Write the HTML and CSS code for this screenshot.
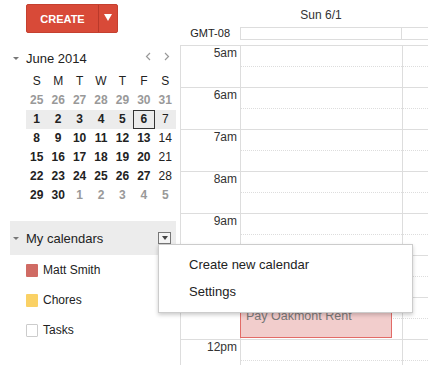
FILE: index.html
```html
<!DOCTYPE html>
<html lang="en">
<head>
    <meta charset="UTF-8">
    <title>Calendar</title>
    <link rel="stylesheet" href="styles.css">
</head>
<body>
    <div class="app">
        <div class="sidebar">
            <div class="create">
                <button class="create-main">CREATE</button>
                <button class="create-arrow">
                    <svg width="8" height="7" viewBox="0 0 8 7"><path d="M0 0H8L4 7Z" fill="#fff"/></svg>
                </button>
            </div>

            <div class="mini-cal">
                <div class="mini-head">
                    <span class="caret"></span>
                    <span class="month">June 2014</span>
                    <span class="nav">
                        <svg width="6" height="9" viewBox="0 0 6 9"><path d="M5 1L1.5 4.5L5 8" fill="none" stroke="#999" stroke-width="1.2"/></svg>
                        <svg width="6" height="9" viewBox="0 0 6 9"><path d="M1 1L4.5 4.5L1 8" fill="none" stroke="#999" stroke-width="1.2"/></svg>
                    </span>
                </div>
                <div class="week week-names">
                    <span>S</span><span>M</span><span>T</span><span>W</span><span>T</span><span>F</span><span>S</span>
                </div>
                <div class="week">
                    <span class="off">25</span><span class="off">26</span><span class="off">27</span><span class="off">28</span><span class="off">29</span><span class="off">30</span><span class="off">31</span>
                </div>
                <div class="week current">
                    <span>1</span><span>2</span><span>3</span><span>4</span><span>5</span><span class="today">6</span><span class="sat">7</span>
                </div>
                <div class="week">
                    <span>8</span><span>9</span><span>10</span><span>11</span><span>12</span><span>13</span><span class="sat">14</span>
                </div>
                <div class="week">
                    <span>15</span><span>16</span><span>17</span><span>18</span><span>19</span><span>20</span><span class="sat">21</span>
                </div>
                <div class="week">
                    <span>22</span><span>23</span><span>24</span><span>25</span><span>26</span><span>27</span><span class="sat">28</span>
                </div>
                <div class="week">
                    <span>29</span><span>30</span><span class="off">1</span><span class="off">2</span><span class="off">3</span><span class="off">4</span><span class="off">5</span>
                </div>
            </div>

            <div class="cal-band">
                <span class="caret"></span>
                <span class="band-title">My calendars</span>
                <span class="band-menu"><span class="mini-caret"></span></span>
            </div>
            <ul class="cal-list">
                <li><span class="swatch red"></span>Matt Smith</li>
                <li><span class="swatch yellow"></span>Chores</li>
                <li><span class="swatch empty"></span>Tasks</li>
            </ul>

            <div class="menu">
                <div class="menu-item">Create new calendar</div>
                <div class="menu-item">Settings</div>
            </div>
        </div>

        <div class="main">
            <div class="day-head">
                <div class="gutter"></div>
                <div class="day-name">Sun 6/1</div>
            </div>
            <div class="allday">
                <div class="gutter tz">GMT-08</div>
                <div class="allday-box">
                    <div class="allday-cell"></div>
                    <div class="allday-rest"></div>
                </div>
            </div>

            <div class="grid">
                <div class="hour"><div class="time">5am</div><div class="slot"><div class="half"></div></div><div class="slot rest"><div class="half"></div></div></div>
                <div class="hour"><div class="time">6am</div><div class="slot"><div class="half"></div></div><div class="slot rest"><div class="half"></div></div></div>
                <div class="hour"><div class="time">7am</div><div class="slot"><div class="half"></div></div><div class="slot rest"><div class="half"></div></div></div>
                <div class="hour"><div class="time">8am</div><div class="slot"><div class="half"></div></div><div class="slot rest"><div class="half"></div></div></div>
                <div class="hour"><div class="time">9am</div><div class="slot"><div class="half"></div></div><div class="slot rest"><div class="half"></div></div></div>
                <div class="hour"><div class="time">10am</div><div class="slot"><div class="half"></div></div><div class="slot rest"><div class="half"></div></div></div>
                <div class="hour">
                    <div class="time">11am</div>
                    <div class="slot">
                        <div class="half"></div>
                        <div class="event">Pay Oakmont Rent</div>
                    </div>
                    <div class="slot rest"><div class="half"></div></div>
                </div>
                <div class="hour"><div class="time">12pm</div><div class="slot"><div class="half"></div></div><div class="slot rest"><div class="half"></div></div></div>
            </div>
        </div>
    </div>
</body>
</html>
```

FILE: styles.css
```css
:root {
    --text-color: #222;
    --muted-color: #999;
    --line-color: #ddd;
    --red: #d84a38;
}

* {
    box-sizing: border-box;
    margin: 0;
    padding: 0;
}

body {
    font-family: "Liberation Sans", Arial, sans-serif;
    color: var(--text-color);
    background: #fff;
    overflow: hidden;
}

.app {
    display: flex;
    height: 365px;
}

/* sidebar */

.sidebar {
    width: 180px;
    flex-shrink: 0;
    position: relative;
}

.create {
    display: flex;
    margin: 4px 0 0 26px;
    height: 29px;
    width: 92px;
    border: 1px solid #c5402f;
    border-radius: 2px;
    background: var(--red);
    overflow: hidden;
}

.create button {
    border: none;
    background: transparent;
    color: #fff;
    font-family: inherit;
    cursor: pointer;
}

.create-main {
    width: 71px;
    font-size: 11px;
    font-weight: bold;
}

.create-arrow {
    flex: 1;
    border-left: 1px solid #b9392a !important;
    display: flex;
    align-items: center;
    justify-content: center;
    padding-bottom: 2px;
}

.mini-cal {
    margin: 16px 0 0 26px;
    width: 150px;
}

.mini-head {
    position: relative;
    display: flex;
    align-items: center;
    height: 18px;
    font-size: 13px;
}

.caret {
    position: absolute;
    left: -13px;
    top: 8px;
    border-left: 3px solid transparent;
    border-right: 3px solid transparent;
    border-top: 3px solid #777;
}

.nav {
    margin-left: auto;
    display: flex;
    gap: 13px;
    padding-right: 6px;
    padding-bottom: 4px;
}

.week {
    display: grid;
    grid-template-columns: repeat(7, 1fr);
    height: 19px;
    font-size: 12px;
    font-weight: bold;
    line-height: 19px;
    text-align: center;
}

.week-names {
    margin-top: 5px;
    font-weight: normal;
}

.week .off {
    color: var(--muted-color);
}

.week .sat {
    font-weight: normal;
}

.week.current {
    background: #ececec;
}

.week .today {
    border: 1px solid #333;
    line-height: 17px;
}

.cal-band {
    position: relative;
    display: flex;
    align-items: center;
    margin: 16px 4px 0 10px;
    height: 34px;
    padding-left: 16px;
    background: #ececec;
    font-size: 13px;
}

.cal-band .caret {
    left: 3px;
    top: 16px;
}

.band-menu {
    margin-left: auto;
    margin-right: 5px;
    width: 13px;
    height: 12px;
    border: 1px solid #777;
    background: #f4f4f4;
    display: flex;
    align-items: center;
    justify-content: center;
}

.mini-caret {
    border-left: 3px solid transparent;
    border-right: 3px solid transparent;
    border-top: 4px solid #444;
}

.cal-list {
    list-style: none;
    padding-left: 26px;
}

.cal-list li {
    display: flex;
    align-items: center;
    height: 30px;
    font-size: 12px;
}

.swatch {
    width: 12px;
    height: 13px;
    margin-right: 5px;
    border-radius: 1px;
}

.swatch.red {
    background: #d06b64;
}

.swatch.yellow {
    background: #fad165;
}

.swatch.empty {
    border: 1px solid #ccc;
}

.menu {
    position: absolute;
    left: 158px;
    top: 244px;
    width: 255px;
    padding: 6px 0 7px;
    background: #fff;
    border: 1px solid rgba(0, 0, 0, 0.2);
    box-shadow: 0 2px 4px rgba(0, 0, 0, 0.2);
    z-index: 10;
}

.menu-item {
    height: 27px;
    line-height: 27px;
    padding-left: 30px;
    font-size: 13px;
}

/* day view */

.main {
    flex: 1;
    overflow: hidden;
}

.gutter {
    width: 60px;
    flex-shrink: 0;
}

.day-head {
    display: flex;
    height: 27px;
}

.day-name {
    width: 162px;
    text-align: center;
    font-size: 12px;
    padding-top: 8px;
    color: #333;
}

.allday {
    display: flex;
    height: 18px;
}

.tz {
    font-size: 11px;
    text-align: right;
    padding-right: 10px;
    line-height: 12px;
}

.allday-box {
    flex: 1;
    display: flex;
    height: 13px;
    border: 1px solid var(--line-color);
    border-right: none;
}

.allday-cell {
    width: 161px;
    border-right: 1px solid var(--line-color);
}

.grid {
    border-top: 1px solid var(--line-color);
    border-left: 1px solid var(--line-color);
}

.hour {
    display: flex;
    height: 42px;
    border-bottom: 1px solid var(--line-color);
}

.time {
    width: 59px;
    text-align: right;
    padding-right: 3px;
    font-size: 12px;
    line-height: 14px;
    color: #333;
}

.slot {
    position: relative;
    width: 162px;
    border-left: 1px solid var(--line-color);
}

.slot.rest {
    flex: 1;
    width: auto;
}

.half {
    height: 21px;
    border-bottom: 1px dotted var(--line-color);
}

.event {
    position: absolute;
    left: -1px;
    top: 9px;
    width: 152px;
    height: 31px;
    padding: 1px 5px;
    background: #f2cdcc;
    border: 1px solid #e26b67;
    font-size: 12.5px;
    color: #777;
}
```
